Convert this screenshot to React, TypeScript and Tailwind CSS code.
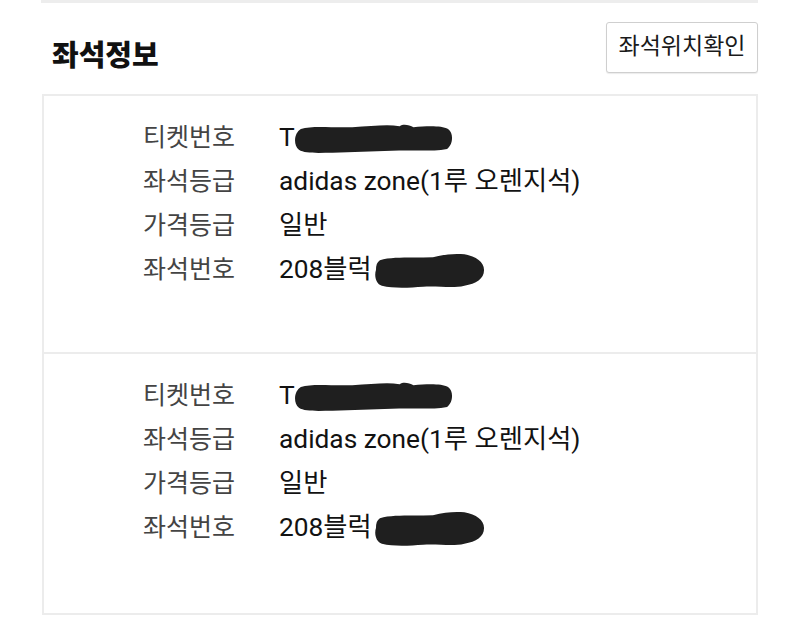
import React from "react";

function BlobLong() {
  return (
    <svg width="160" height="32" viewBox="0 0 162 32" className="inline-block align-middle">
      <path
        d="M8 6 C20 2 40 5 60 4 C80 3 95 1 108 3 C112 0 118 2 122 4 C135 3 150 2 157 6 C163 10 162 22 156 26 C140 29 120 27 100 28 C80 29 60 29 40 30 C25 30 12 31 6 27 C0 22 1 10 8 6 Z"
        fill="#1f1f1f"
      />
    </svg>
  );
}

function BlobShort() {
  return (
    <svg width="112" height="38" viewBox="0 0 114 38" className="inline-block align-middle">
      <path
        d="M6 8 C20 4 40 6 60 5 C72 2 82 1 92 2 C104 4 112 10 112 18 C112 27 104 32 92 34 C80 37 66 34 50 35 C36 36 20 37 8 34 C2 32 0 24 2 18 C2 13 3 10 6 8 Z"
        fill="#1f1f1f"
      />
    </svg>
  );
}

function Row({ label, children }: { label: string; children: React.ReactNode }) {
  return (
    <div className="flex h-[44px] items-center">
      <div className="w-[136px] shrink-0 text-[25px] text-[#444444]">{label}</div>
      <div className="flex items-center text-[26.3px] text-[#121212]">{children}</div>
    </div>
  );
}

function Section({ className }: { className: string }) {
  return (
    <div className={className}>
      <Row label="티켓번호">
        <span>T</span>
        <span className="-ml-[2px]">
          <BlobLong />
        </span>
      </Row>
      <Row label="좌석등급">
        <span>adidas zone(1루 오렌지석)</span>
      </Row>
      <Row label="가격등급">
        <span>일반</span>
      </Row>
      <Row label="좌석번호">
        <span>208블럭</span>
        <span className="ml-[2px]">
          <BlobShort />
        </span>
      </Row>
    </div>
  );
}

export default function App() {
  return (
    <div
      className="w-[800px] h-[627px] bg-white overflow-hidden"
      style={{ fontFamily: "Roboto, 'Noto Sans CJK KR', sans-serif" }}
    >
      <div className="ml-[41px] mr-[42px]">
        <div className="h-[3px] bg-[#ededed]" />
        <div className="flex h-[91px] items-start justify-between">
          <div className="mt-[36px] ml-[11px] text-[29px] font-black leading-[34px] text-[#111111]">
            좌석정보
          </div>
          <button className="mt-[19px] h-[51px] w-[152px] rounded-[3px] border border-[#cfcfcf] bg-white text-[23px] text-[#1a1a1a] shadow-[0_1px_1px_rgba(0,0,0,0.08)]">
            좌석위치확인
          </button>
        </div>
        <div className="ml-[1px] border-2 border-[#ececec]">
          <Section className="h-[258px] border-b-2 border-[#ececec] pl-[99px] pt-[20px]" />
          <Section className="h-[259px] pl-[99px] pt-[20px]" />
        </div>
      </div>
    </div>
  );
}
